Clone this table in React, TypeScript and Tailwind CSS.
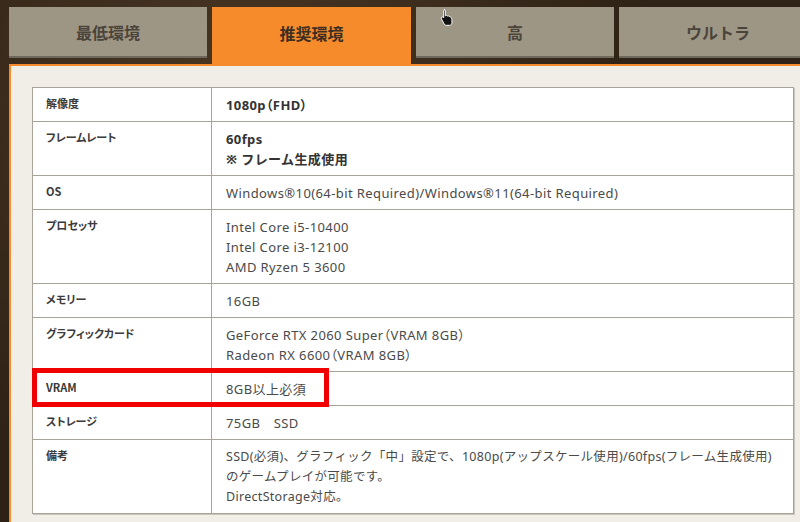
const rows: { label: string; lines: string[]; bold?: boolean; note?: boolean; palt?: boolean }[] = [
  { label: "解像度", lines: ["1080p（FHD）"], bold: true, palt: true },
  { label: "フレームレート", lines: ["60fps", "※ フレーム生成使用"], bold: true },
  { label: "OS", lines: ["Windows®10(64-bit Required)/Windows®11(64-bit Required)"] },
  { label: "プロセッサ", lines: ["Intel Core i5-10400", "Intel Core i3-12100", "AMD Ryzen 5 3600"] },
  { label: "メモリー", lines: ["16GB"] },
  { label: "グラフィックカード", lines: ["GeForce RTX 2060 Super（VRAM 8GB）", "Radeon RX 6600（VRAM 8GB）"], palt: true },
  { label: "VRAM", lines: ["8GB以上必須"] },
  { label: "ストレージ", lines: ["75GB　SSD"] },
  {
    label: "備考",
    lines: [
      "SSD(必須)、グラフィック「中」設定で、1080p(アップスケール使用)/60fps(フレーム生成使用)",
      "のゲームプレイが可能です。",
      "DirectStorage対応。",
    ],
    note: true,
  },
];

const tabs = ["最低環境", "推奨環境", "高", "ウルトラ"];

export default function App() {
  return (
    <div
      className="relative w-[800px] h-[522px] overflow-hidden bg-[#33261a] bg-[radial-gradient(circle_at_30%_20%,#4a3723_0%,#2e2216_60%)]"
      style={{ fontFamily: '"Noto Sans CJK JP", "Noto Sans", sans-serif' }}
    >
      {/* tabs */}
      <div className="flex gap-[5px] pl-[9px] pt-[7px] h-[64px]">
        {tabs.map((t, i) =>
          i === 1 ? (
            <div
              key={t}
              className="w-[199px] shrink-0 h-[57px] bg-[#f68b2c] text-[#3b2e22] text-[16px] font-bold flex items-center justify-center pb-[5px]"
            >
              {t}
            </div>
          ) : (
            <div
              key={t}
              className="w-[198px] shrink-0 h-[51px] bg-[#9e9685] border-b-2 border-[#6f685c] text-[#4b443a] text-[16px] font-bold flex items-center justify-center"
            >
              {t}
            </div>
          )
        )}
      </div>

      {/* panel */}
      <div className="ml-[9px] border-l-2 border-t-2 border-[#f68b2c] bg-[#f1eee8] h-[460px] pl-[21px] pt-[21px] pr-[7px]">
        <div className="relative">
          <table className="w-[762px] border-collapse bg-white border border-[#a8a398] shadow-[1px_1px_0_#c9c5bc]">
            <tbody>
              {rows.map((r) => (
                <tr key={r.label} className="border-b border-[#a8a398]">
                  <td className="w-[179px] align-top border-r border-[#a8a398] pl-[13px] pt-[5px] text-[11px] font-bold text-[#3a3a3a] leading-[20px] [font-feature-settings:'palt']">
                    {r.label}
                  </td>
                  <td
                    className={
                      "align-top pl-[14px] pt-[7px] pb-[6px] leading-[20px] " +
                      (r.note ? "text-[12.5px] tracking-[0.3px] " : "text-[13px] tracking-[0.4px] ") +
                      (r.palt ? "[font-feature-settings:'palt'] " : "") +
                      (r.bold ? "font-bold text-[#333]" : "text-[#4a4a4a]")
                    }
                    style={{ fontFamily: '"Noto Sans", "Noto Sans CJK JP", sans-serif' }}
                  >
                    {r.lines.map((l) => (
                      <div key={l} className="whitespace-nowrap">{l}</div>
                    ))}
                  </td>
                </tr>
              ))}
            </tbody>
          </table>
          {/* highlight */}
          <div className="absolute left-0 top-[281px] w-[297px] h-[39px] border-[5px] border-[#f00000]" />
        </div>
      </div>

      {/* cursor */}
      <svg className="absolute left-[440px] top-[8px]" width="14" height="18" viewBox="0 0 14 18">
        <path
          d="M4 1.5c.8 0 1.3.6 1.3 1.3v5l.3-.1c.6-.4 1.5-.3 1.9.3.5-.3 1.3-.2 1.7.4.6-.2 1.3.1 1.6.7l.7 1.2c.4.8.4 1.6.4 2.4v2c0 1.4-1 2.6-2.4 2.6H6.3c-.8 0-1.5-.4-2-1L1.4 10.9c-.4-.6-.3-1.3.2-1.7.5-.4 1.2-.3 1.6.1l.5.6V2.8c0-.7.5-1.3 1.3-1.3z"
          fill="#111"
          stroke="#fff"
          strokeWidth="1"
        />
      </svg>
    </div>
  );
}
